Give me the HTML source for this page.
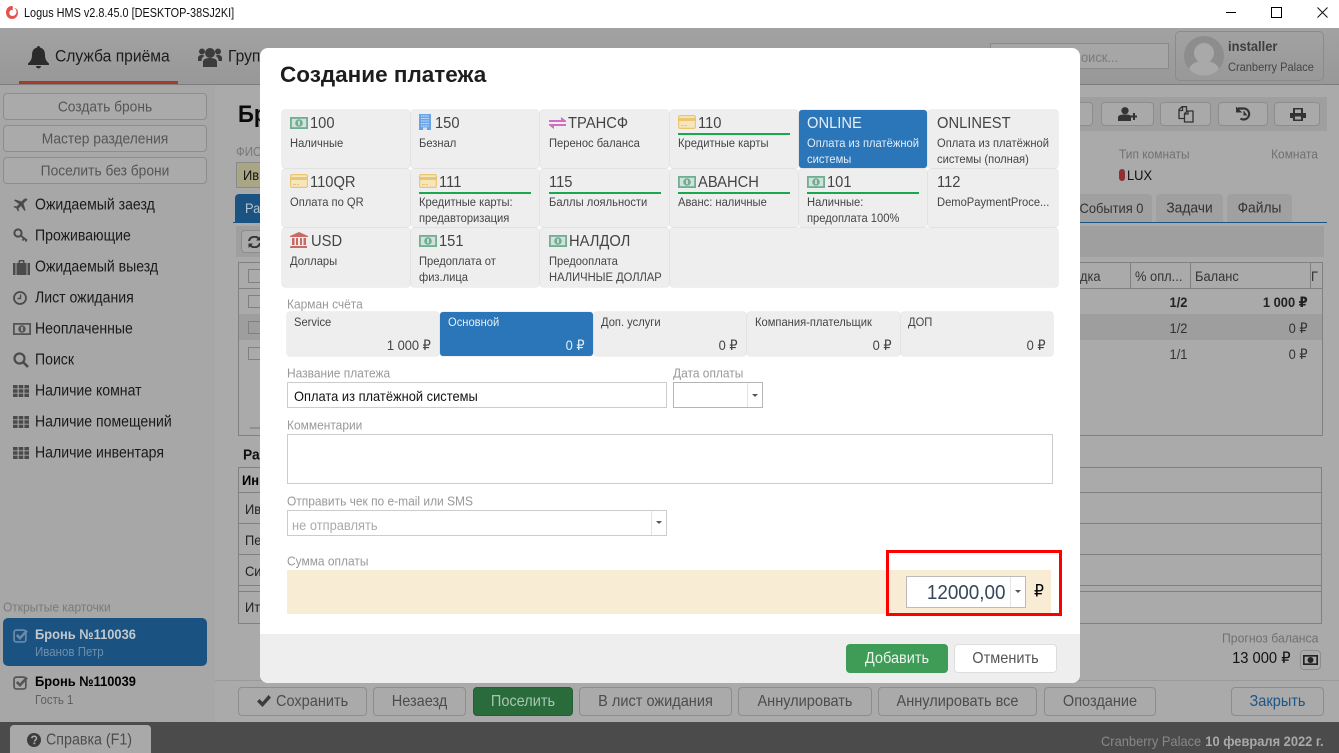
<!DOCTYPE html>
<html lang="ru"><head><meta charset="utf-8"><title>Logus HMS</title>
<style>
*{box-sizing:border-box}
html,body{margin:0;padding:0;width:1339px;height:753px;overflow:hidden;background:#aaa}
body{position:relative;font-family:"Liberation Sans","DejaVu Sans",sans-serif;color:#1c1c1c}
.b{position:absolute}
.t,.r,.c{position:absolute;white-space:nowrap;line-height:1}
.t{transform-origin:left center;transform:translateY(-50%) scaleX(.92)}
.r{transform-origin:right center;transform:translateY(-50%) scaleX(.92)}
.c{text-align:center;transform:translateY(-50%) scaleX(.92)}
.bt{position:absolute;border:1px solid #8d8d8d;border-radius:4px;background:#aaa}
.s{position:absolute}
.cell{position:absolute;background:#eee;border-radius:3px;box-shadow:0 0 0 .5px #e2e2e2}
.big{font-size:16px;color:#444;margin-top:.6px}
.ds{font-size:12.15px;color:#444}
.gl{position:absolute;height:2px;background:#1aa84f;width:112px}
.lbl{font-size:13px;color:#999}
.pk{position:absolute;background:#eee;top:312px;height:44px;border-radius:3px;box-shadow:0 0 0 .5px #e2e2e2}
.men{font-size:15.3px;color:#1a1a1a}
.sb{font-size:15px;color:#555}
.act{font-size:15.8px;color:#4c4c4c}
.tx{font-size:14px;color:#222}
.ln{position:absolute;background:#808080}
</style></head><body>
<svg width="0" height="0" style="position:absolute"><defs>
<symbol id="m" viewBox="0 0 18 12"><rect width="18" height="12" fill="#6fae93"/><rect x="1.800" y="1.800" width="14.400" height="8.400" fill="#d3e2d9"/><circle cx="9" cy="6" r="3.800" fill="#6fae93"/><rect x="8.300" y="3.800" width="1.400" height="4.400" fill="#e8f2ec"/></symbol>
<symbol id="card" viewBox="0 0 18 14"><rect x=".6" y=".6" width="16.800" height="12.800" rx="1.500" fill="#f6e6bd" stroke="#eac673" stroke-width="1.200"/><rect x="1" y="3" width="16" height="3" fill="#eac673"/><rect x="3" y="10" width="3" height="1" fill="#eac673"/><rect x="7" y="10" width="2" height="1" fill="#eac673"/></symbol>
<symbol id="bank" viewBox="0 0 18 16"><path d="M9 0L18 4V5H0V4Z M1 14H17V16H0V15Z M2 6H4.500V13H2Z M6 6H8V13H6Z M10 6H12V13H10Z M13.500 6H16V13H13.500Z" fill="#c96a63"/></symbol>
<symbol id="bld" viewBox="0 0 12 16"><rect width="12" height="16" fill="#6ba4e6"/><path d="M2 2h8M2 4.500h8M2 7h8M2 9.500h8M2 12h8" stroke="#cfe2f8" stroke-width="1.100" stroke-dasharray="1.500 .6"/><rect x="4" y="13.500" width="4" height="2.500" fill="#cfe2f8"/></symbol>
<symbol id="tr" viewBox="0 0 17 12"><path d="M0 3h12V0l5 3.700V5H0ZM17 7H0v1.300L5 12V9h12Z" fill="#cf6fc0"/></symbol>
<symbol id="grid" viewBox="0 0 16 12"><path d="M0 0h4.600v3.400H0zM5.700 0h4.600v3.400H5.700zM11.400 0H16v3.400h-4.600zM0 4.300h4.600v3.400H0zM5.700 4.300h4.600v3.400H5.700zM11.400 4.300H16v3.400h-4.600zM0 8.600h4.600V12H0zM5.700 8.600h4.600V12H5.700zM11.400 8.600H16V12h-4.600z" fill="#4b4b4b"/></symbol>
<symbol id="arr" viewBox="0 0 6 3"><path d="M0 0h6L3 3Z" fill="#555"/></symbol>
<symbol id="chk" viewBox="0 0 14 14"><rect x="1" y="2" width="11" height="11" rx="2" fill="none" stroke="currentColor" stroke-width="1.600"/><path d="M3.500 6.500L6.500 9.500L13 2.500" fill="none" stroke="currentColor" stroke-width="2.400"/></symbol>
</defs></svg>

<!-- Title bar -->
<div class="b" style="left:0;top:0;width:1339px;height:28px;background:#fff"></div>
<svg class="s" style="left:5px;top:5px" width="14" height="15" viewBox="0 0 14 15"><path d="M7 1C3 1 1 4 1 7.500S3.500 14 7 14s6-3 6-6.500C13 4.500 11 3 9 3c2 1 2.500 2.500 2.500 4S10 11 7.500 11 4 9 4.500 7 7 4.500 8 5.500C7 2.500 9 2 7 1Z" fill="#e8504a"/></svg>
<div class="t" style="left:24px;top:13px;font-size:12.500px;color:#111;transform:translateY(-50%) scaleX(.87)">Logus HMS v2.8.45.0 [DESKTOP-38SJ2KI]</div>
<div class="b" style="left:1226px;top:12px;width:10px;height:1px;background:#000"></div>
<div class="b" style="left:1271px;top:7px;width:11px;height:11px;border:1px solid #000"></div>
<svg class="s" style="left:1317px;top:7px" width="11" height="11"><path d="M.5.500L10.500 10.500M10.500.500L.5 10.500" stroke="#111"/></svg>

<!-- Nav -->
<div class="b" style="left:0;top:28px;width:1339px;height:57px;background:linear-gradient(#a2a2a2,#989898);border-bottom:1px solid #7d7d7d"></div>
<div class="b" style="left:19px;top:81px;width:159px;height:3px;background:#a63a2b"></div>
<svg class="s" style="left:28px;top:46px" width="21" height="23" viewBox="0 0 21 23"><path d="M10.500 0c1 0 1.500.7 1.500 1.500C15.500 2.500 17 5 17 9c0 5 2 6.500 4 8.500V19H0v-1.500C2 15.500 4 14 4 9c0-4 1.500-6.500 5-7.500C9 .7 9.500 0 10.500 0ZM8 20h5a2.500 2.500 0 0 1-5 0Z" fill="#2b2b2b"/></svg>
<div class="t" style="left:55px;top:56px;font-size:17px;color:#1c1c1c">Служба приёма</div>
<svg class="s" style="left:198px;top:45px" width="24" height="24" viewBox="0 0 24 24"><g fill="#3c3c3c"><circle cx="12" cy="8" r="5"/><circle cx="4" cy="6.500" r="3"/><circle cx="20" cy="6.500" r="3"/><path d="M5 22v-5c0-3 3-4 7-4s7 1 7 4v5Z"/><path d="M0 16v-3c0-2 1.500-3 4-3 1 0 2 .2 2.500 1C4.500 12 3.500 13.500 3.500 16ZM24 16v-3c0-2-1.500-3-4-3-1 0-2 .2-2.500 1 2 1 3 2.500 3 5Z"/></g></svg>
<div class="t" style="left:228px;top:56px;font-size:17px;color:#1c1c1c">Груп</div>

<div class="b" style="left:990px;top:43px;width:179px;height:26px;background:#a6a6a6;border:1px solid #8a8a8a"></div>
<div class="t" style="left:1081px;top:57px;font-size:14px;color:#7a7a7a">оиск...</div>
<div class="b" style="left:1175px;top:31px;width:149px;height:50px;border:1px solid #8b8b8b;border-radius:5px"></div>
<svg class="s" style="left:1184px;top:36px" width="40" height="40" viewBox="0 0 40 40"><circle cx="20" cy="20" r="20" fill="#8d8d8d"/><circle cx="20" cy="17" r="10" fill="#a9a9a9"/><path d="M5 33C7 27 13 25 20 25s13 2 15 8A20 20 0 0 1 5 33Z" fill="#a9a9a9"/></svg>
<div class="t" style="left:1228px;top:46px;font-size:14px;font-weight:bold;color:#3e3e3e">installer</div>
<div class="t" style="left:1228px;top:67px;font-size:12px;color:#444">Cranberry Palace</div>

<!-- Sidebar -->
<div class="b" style="left:0;top:85px;width:215px;height:637px;background:#a7a7a7"></div>
<div class="bt" style="left:3px;top:93px;width:204px;height:27px"></div>
<div class="bt" style="left:3px;top:125px;width:204px;height:27px"></div>
<div class="bt" style="left:3px;top:157px;width:204px;height:27px"></div>
<div class="c sb" style="left:3px;width:204px;top:107px">Создать бронь</div>
<div class="c sb" style="left:3px;width:204px;top:139px">Мастер разделения</div>
<div class="c sb" style="left:3px;width:204px;top:171px">Поселить без брони</div>

<svg class="s" style="left:13px;top:198px" width="15" height="15" viewBox="0 0 15 15"><path d="M14 1c-1-1-2.500-.5-3.500.5L8.500 3.500 2 1.500 1 2.500l5 3.500-2.500 2.500-2-.5L.5 9l3 1.500L5 13.500l1-1-.5-2L8 8l3.500 5 1-1-2-6.500 2-2C13.500 2.500 15 2 14 1Z" fill="#4b4b4b"/></svg>
<svg class="s" style="left:13px;top:228px" width="16" height="16" viewBox="0 0 16 16"><circle cx="5" cy="5" r="3.600" fill="none" stroke="#4b4b4b" stroke-width="2"/><path d="M7.500 7.500L14 12.500M11 10.500l-1.500 2M13.500 12l-1 1.500" stroke="#4b4b4b" stroke-width="1.800" fill="none"/></svg>
<svg class="s" style="left:13px;top:260px" width="17" height="15" viewBox="0 0 17 15"><path d="M5.500 3V1c0-.5.500-1 1-1h4c.5 0 1 .5 1 1v2H17v12H0V3ZM7 3h3V1.500H7Z" fill="#4b4b4b"/><path d="M3 3v12M14 3v12" stroke="#a7a7a7"/></svg>
<svg class="s" style="left:13px;top:291px" width="14" height="14" viewBox="0 0 14 14"><circle cx="7" cy="7" r="6" fill="none" stroke="#4b4b4b" stroke-width="1.800"/><path d="M7.500 3.500V7.500H4.500" fill="none" stroke="#4b4b4b" stroke-width="1.400"/></svg>
<svg class="s" style="left:13px;top:323px" width="18" height="12" viewBox="0 0 18 12"><rect width="18" height="12" fill="#555"/><rect x="1.800" y="1.800" width="14.400" height="8.400" fill="#a7a7a7"/><circle cx="9" cy="6" r="3.800" fill="#555"/><rect x="8.300" y="3.800" width="1.400" height="4.400" fill="#bbb"/></svg>
<svg class="s" style="left:13px;top:352px" width="16" height="16" viewBox="0 0 16 16"><circle cx="6.500" cy="6.500" r="5" fill="none" stroke="#4b4b4b" stroke-width="2.200"/><path d="M10 10l5 5" stroke="#4b4b4b" stroke-width="2.600"/></svg>
<svg class="s" style="left:13px;top:385px" width="16" height="12"><use href="#grid"/></svg>
<svg class="s" style="left:13px;top:416px" width="16" height="12"><use href="#grid"/></svg>
<svg class="s" style="left:13px;top:447px" width="16" height="12"><use href="#grid"/></svg>
<div class="t men" style="left:35px;top:205px">Ожидаемый заезд</div>
<div class="t men" style="left:35px;top:236px">Проживающие</div>
<div class="t men" style="left:35px;top:267px">Ожидаемый выезд</div>
<div class="t men" style="left:35px;top:298px">Лист ожидания</div>
<div class="t men" style="left:35px;top:329px">Неоплаченные</div>
<div class="t men" style="left:35px;top:360px">Поиск</div>
<div class="t men" style="left:35px;top:391px">Наличие комнат</div>
<div class="t men" style="left:35px;top:422px">Наличие помещений</div>
<div class="t men" style="left:35px;top:453px">Наличие инвентаря</div>

<div class="t" style="left:3px;top:607px;font-size:13px;color:#7a7a7a">Открытые карточки</div>
<div class="b" style="left:3px;top:618px;width:204px;height:48px;background:#1a5282;border-radius:5px"></div>
<svg class="s" style="left:13px;top:628px;color:#6a8aa6" width="15" height="15"><use href="#chk"/></svg>
<div class="t" style="left:35px;top:634px;font-size:14px;font-weight:bold;color:#c3c8cd">Бронь №110036</div>
<div class="t" style="left:35px;top:652px;font-size:12.500px;color:#6f8ea9">Иванов Петр</div>
<svg class="s" style="left:13px;top:675px;color:#555" width="15" height="15"><use href="#chk"/></svg>
<div class="t" style="left:35px;top:681px;font-size:14px;font-weight:bold;color:#000">Бронь №110039</div>
<div class="t" style="left:35px;top:700px;font-size:12.500px;color:#606060">Гость 1</div>

<!-- Main behind modal -->
<div class="t" style="left:238px;top:115px;font-size:24px;font-weight:bold;color:#0a0a0a">Бр</div>
<div class="t" style="left:236px;top:152px;font-size:12.500px;color:#787878">ФИО</div>
<div class="b" style="left:236px;top:162px;width:30px;height:26px;background:#a9a686;border:1px solid #8a8a8a"></div>
<div class="t" style="left:243px;top:175px;font-size:14px;color:#111">Ив</div>
<div class="b" style="left:235px;top:194px;width:30px;height:28px;background:#1a5282;border-radius:4px 0 0 0"></div>
<div class="t" style="left:245px;top:208px;font-size:14px;color:#b7c6d4">Ра</div>
<div class="b" style="left:233px;top:222px;width:1094px;height:1px;background:#1a5282"></div>
<div class="b" style="left:236px;top:226px;width:1088px;height:31px;background:#9f9f9f"></div>
<div class="bt" style="left:241px;top:230px;width:30px;height:23px"></div>
<svg class="s" style="left:248px;top:236px" width="13" height="12" viewBox="0 0 13 12"><path d="M1 5a5.500 5 0 0 1 10-2M12 7a5.500 5 0 0 1-10 2" fill="none" stroke="#333" stroke-width="2"/><path d="M12.500 0v4.500H8ZM.5 12V7.500H5Z" fill="#333"/></svg>

<div class="b" style="left:238px;top:262px;width:1085px;height:174px;border:1px solid #808080"></div>
<div class="ln" style="left:238px;top:288px;width:1085px;height:1px"></div>
<div class="b" style="left:239px;top:314px;width:1083px;height:26px;background:#9e9e9e"></div>
<div class="b" style="left:248px;top:269px;width:14px;height:14px;border:1px solid #808080"></div>
<div class="b" style="left:248px;top:295px;width:13px;height:13px;border:1px solid #808080"></div>
<div class="b" style="left:248px;top:321px;width:13px;height:13px;border:1px solid #808080"></div>
<div class="b" style="left:248px;top:347px;width:13px;height:13px;border:1px solid #808080"></div>
<div class="b" style="left:250px;top:427px;width:10px;height:2px;background:#909090"></div>
<div class="ln" style="left:1130px;top:263px;width:1px;height:25px"></div>
<div class="ln" style="left:1190px;top:263px;width:1px;height:25px"></div>
<div class="ln" style="left:1310px;top:263px;width:1px;height:25px"></div>
<div class="t tx" style="left:1080px;top:276px;color:#333">дка</div>
<div class="t tx" style="left:1135px;top:276px;color:#333">% опл...</div>
<div class="t tx" style="left:1195px;top:276px;color:#333">Баланс</div>
<div class="t tx" style="left:1311px;top:276px;color:#333">Г</div>
<div class="r tx" style="right:152px;top:302px;font-weight:bold;color:#222">1/2</div>
<div class="r tx" style="right:31px;top:302px;font-weight:bold;color:#222">1 000 ₽</div>
<div class="r tx" style="right:152px;top:328px;color:#333">1/2</div>
<div class="r tx" style="right:31px;top:328px;color:#333">0 ₽</div>
<div class="r tx" style="right:152px;top:354px;color:#333">1/1</div>
<div class="r tx" style="right:31px;top:354px;color:#333">0 ₽</div>

<div class="t" style="left:243px;top:455px;font-size:15px;font-weight:bold;color:#111">Ра</div>
<div class="b" style="left:238px;top:467px;width:1084px;height:157px;border:1px solid #808080"></div>
<div class="ln" style="left:238px;top:492px;width:1084px;height:1px"></div>
<div class="ln" style="left:238px;top:523px;width:1084px;height:1px"></div>
<div class="ln" style="left:238px;top:554px;width:1084px;height:1px"></div>
<div class="ln" style="left:238px;top:585px;width:1084px;height:1px"></div>
<div class="ln" style="left:238px;top:591px;width:1084px;height:1px"></div>
<div class="t tx" style="left:242px;top:480px;font-weight:bold;color:#000">Ин</div>
<div class="t tx" style="left:245px;top:509px">Ив</div>
<div class="t tx" style="left:245px;top:540px">Пе</div>
<div class="t tx" style="left:245px;top:571px">Си</div>
<div class="t tx" style="left:245px;top:607px">Ит</div>

<!-- top right -->
<div class="b" style="left:1070px;top:97px;width:257px;height:34px;background:#9f9f9f"></div>
<div class="bt" style="left:1060px;top:102px;width:33px;height:24px;background:#a9a9a9"></div>
<div class="bt" style="left:1101px;top:102px;width:53px;height:24px;background:#a9a9a9"></div>
<div class="bt" style="left:1160px;top:102px;width:51px;height:24px;background:#a9a9a9"></div>
<div class="bt" style="left:1218px;top:102px;width:50px;height:24px;background:#a9a9a9"></div>
<div class="bt" style="left:1274px;top:102px;width:46px;height:24px;background:#a9a9a9"></div>
<svg class="s" style="left:1118px;top:107px" width="19" height="14" viewBox="0 0 19 14"><circle cx="7" cy="3.700" r="3.600" fill="#333"/><path d="M0 14V10.500C0 8.500 2 7.500 7 7.500s6 1 6 2V14ZM12 8.500h3V6h2v2.500h2v2h-2V13h-2v-2.500h-3Z" fill="#333"/></svg>
<svg class="s" style="left:1178px;top:106px" width="16" height="17" viewBox="0 0 16 17"><path d="M1 3.500L4 .7H8.500V5H15V16H6.500V12.500H1ZM1 4.500H4.500V1M6.500 12.500V7.500L9.500 5M10 5V8H6.500" fill="none" stroke="#333" stroke-width="1.300"/></svg>
<svg class="s" style="left:1236px;top:107px" width="15" height="14" viewBox="0 0 15 14"><path d="M2 1.500H8a5.500 5.500 0 1 1-3.500 10" fill="none" stroke="#333" stroke-width="2.200"/><path d="M0 0v5h5ZM8 4v4h3" fill="#333" stroke="#333"/></svg>
<svg class="s" style="left:1290px;top:107px" width="16" height="14" viewBox="0 0 16 14"><path d="M3 6V1h10v5h3v5h-3v3H3v-3H0V6Zm2 0h6V2.500H5Zm0 6.500h6V9.500H5Z" fill="#333" fill-rule="evenodd"/></svg>
<div class="t" style="left:1119px;top:154px;font-size:13px;color:#707070">Тип комнаты</div>
<div class="r" style="right:21px;top:154px;font-size:13px;color:#707070">Комната</div>
<div class="b" style="left:1119px;top:169px;width:6px;height:12px;background:#8f2f2f;border-radius:3px"></div>
<div class="t" style="left:1127px;top:175px;font-size:14px;color:#111">LUX</div>
<div class="b" style="left:1070px;top:194px;width:82px;height:28px;background:#a0a0a0;border-radius:4px 4px 0 0"></div>
<div class="b" style="left:1156px;top:194px;width:67px;height:28px;background:#a0a0a0;border-radius:4px 4px 0 0"></div>
<div class="b" style="left:1227px;top:194px;width:65px;height:28px;background:#a0a0a0;border-radius:4px 4px 0 0"></div>
<div class="r tx" style="right:196px;top:208px;color:#333">События 0</div>
<div class="c" style="left:1156px;width:67px;top:208px;color:#333;font-size:15px">Задачи</div>
<div class="c" style="left:1227px;width:65px;top:208px;color:#333;font-size:15px">Файлы</div>

<div class="t" style="left:1222px;top:638px;font-size:13.300px;color:#707070">Прогноз баланса</div>
<div class="r" style="right:48px;top:659px;font-size:16px;color:#111">13 000 ₽</div>
<div class="bt" style="left:1300px;top:650px;width:21px;height:20px"></div>
<svg class="s" style="left:1303px;top:655px" width="15" height="10" viewBox="0 0 18 12"><rect width="18" height="12" fill="#222"/><rect x="2" y="2" width="14" height="8" fill="#aaa"/><circle cx="9" cy="6" r="3.600" fill="#222"/></svg>

<!-- Action bar -->
<div class="b" style="left:215px;top:680px;width:1124px;height:1px;background:#9a9a9a"></div>
<div class="bt" style="left:238px;top:687px;width:129px;height:29px"></div>
<svg class="s" style="left:257px;top:695px" width="14" height="12" viewBox="0 0 14 12"><path d="M0 6.500L2.500 4 5.500 7 11.500 0 14 2.500 5.500 12Z" fill="#3c3c3c"/></svg>
<div class="t act" style="left:276px;top:702px">Сохранить</div>
<div class="bt" style="left:373px;top:687px;width:93px;height:29px"></div><div class="c act" style="left:373px;width:93px;top:702px">Незаезд</div>
<div class="bt" style="left:473px;top:687px;width:100px;height:29px;background:#2a6b3b;border-color:#255f34"></div><div class="c act" style="left:473px;width:100px;top:702px;color:#a9c7b0">Поселить</div>
<div class="bt" style="left:579px;top:687px;width:153px;height:29px"></div><div class="c act" style="left:579px;width:153px;top:702px">В лист ожидания</div>
<div class="bt" style="left:738px;top:687px;width:134px;height:29px"></div><div class="c act" style="left:738px;width:134px;top:702px">Аннулировать</div>
<div class="bt" style="left:878px;top:687px;width:159px;height:29px"></div><div class="c act" style="left:878px;width:159px;top:702px">Аннулировать все</div>
<div class="bt" style="left:1044px;top:687px;width:112px;height:29px"></div><div class="c act" style="left:1044px;width:112px;top:702px">Опоздание</div>
<div class="bt" style="left:1231px;top:687px;width:93px;height:29px"></div><div class="c act" style="left:1231px;width:93px;top:702px;color:#1e5585">Закрыть</div>

<!-- Footer bar -->
<div class="b" style="left:0;top:722px;width:1339px;height:31px;background:#4b4b4b"></div>
<div class="b" style="left:10px;top:725px;width:141px;height:28px;background:#a9a9a9;border-radius:4px 4px 0 0"></div>
<svg class="s" style="left:27px;top:733px" width="14" height="14" viewBox="0 0 14 14"><circle cx="7" cy="7" r="7" fill="#3c3c3c"/><path d="M4.700 5.200C5 3.800 6 3.300 7.200 3.300c1.300 0 2.300.8 2.300 2 0 1.700-2 1.700-2 3.200" fill="none" stroke="#a9a9a9" stroke-width="1.500"/><rect x="6.400" y="9.500" width="1.900" height="1.700" fill="#a9a9a9"/></svg>
<div class="t" style="left:46px;top:740px;font-size:15.500px;color:#4c4c4c">Справка (F1)</div>
<div class="t" style="left:1101px;top:741px;font-size:14px;color:#888">Cranberry Palace</div>
<div class="r" style="right:15px;top:741px;font-size:14px;font-weight:bold;color:#a9a9a9">10 февраля 2022 г.</div>

<!-- Modal -->
<div class="b" style="left:260px;top:48px;width:820px;height:635px;background:#fff;border-radius:8px;overflow:hidden">
  <div class="b" style="left:0;top:586px;width:820px;height:49px;background:#eee"></div>
</div>
<div class="t" style="left:280px;top:75px;font-size:22.500px;font-weight:bold;color:#1d1d1d;transform:translateY(-50%) scaleX(1)">Создание платежа</div>

<!-- grid -->
<div class="cell" style="left:282px;top:110px;width:128px;height:58px"></div>
<div class="cell" style="left:411px;top:110px;width:128px;height:58px"></div>
<div class="cell" style="left:540px;top:110px;width:129px;height:58px"></div>
<div class="cell" style="left:670px;top:110px;width:128px;height:58px"></div>
<div class="cell" style="left:799px;top:110px;width:128px;height:58px;background:#2b75b9"></div>
<div class="cell" style="left:928px;top:110px;width:130px;height:58px"></div>
<div class="cell" style="left:282px;top:169px;width:128px;height:58px"></div>
<div class="cell" style="left:411px;top:169px;width:128px;height:58px"></div>
<div class="cell" style="left:540px;top:169px;width:129px;height:58px"></div>
<div class="cell" style="left:670px;top:169px;width:128px;height:58px"></div>
<div class="cell" style="left:799px;top:169px;width:128px;height:58px"></div>
<div class="cell" style="left:928px;top:169px;width:130px;height:58px"></div>
<div class="cell" style="left:282px;top:228px;width:128px;height:59px"></div>
<div class="cell" style="left:411px;top:228px;width:128px;height:59px"></div>
<div class="cell" style="left:540px;top:228px;width:129px;height:59px"></div>
<div class="cell" style="left:670px;top:228px;width:388px;height:59px"></div>

<svg class="s" style="left:290px;top:117px" width="18" height="12"><use href="#m"/></svg>
<div class="t big" style="left:310px;top:123px">100</div><div class="t ds" style="left:290px;top:143px">Наличные</div>
<svg class="s" style="left:419px;top:114px" width="12" height="16"><use href="#bld"/></svg>
<div class="t big" style="left:435px;top:123px">150</div><div class="t ds" style="left:419px;top:143px">Безнал</div>
<svg class="s" style="left:549px;top:117px" width="17" height="12"><use href="#tr"/></svg>
<div class="t big" style="left:568px;top:123px">ТРАНСФ</div><div class="t ds" style="left:549px;top:143px">Перенос баланса</div>
<svg class="s" style="left:678px;top:115px" width="18" height="14"><use href="#card"/></svg>
<div class="t big" style="left:698px;top:123px">110</div><div class="gl" style="left:678px;top:133px"></div><div class="t ds" style="left:678px;top:143px">Кредитные карты</div>
<div class="t big" style="left:807px;top:123px;color:#e4eef7">ONLINE</div><div class="t ds" style="left:807px;top:143px;color:#e4eef7">Оплата из платёжной</div><div class="t ds" style="left:807px;top:159px;color:#e4eef7">системы</div>
<div class="t big" style="left:937px;top:123px">ONLINEST</div><div class="t ds" style="left:937px;top:143px">Оплата из платёжной</div><div class="t ds" style="left:937px;top:159px">системы (полная)</div>

<svg class="s" style="left:290px;top:174px" width="18" height="14"><use href="#card"/></svg>
<div class="t big" style="left:310px;top:182px">110QR</div><div class="t ds" style="left:290px;top:202px">Оплата по QR</div>
<svg class="s" style="left:419px;top:174px" width="18" height="14"><use href="#card"/></svg>
<div class="t big" style="left:439px;top:182px">111</div><div class="gl" style="left:419px;top:192px"></div><div class="t ds" style="left:419px;top:202px">Кредитные карты:</div><div class="t ds" style="left:419px;top:218px">предавторизация</div>
<div class="t big" style="left:549px;top:182px">115</div><div class="gl" style="left:549px;top:192px"></div><div class="t ds" style="left:549px;top:202px">Баллы лояльности</div>
<svg class="s" style="left:678px;top:176px" width="18" height="12"><use href="#m"/></svg>
<div class="t big" style="left:698px;top:182px">АВАНСН</div><div class="gl" style="left:678px;top:192px"></div><div class="t ds" style="left:678px;top:202px">Аванс: наличные</div>
<svg class="s" style="left:807px;top:176px" width="18" height="12"><use href="#m"/></svg>
<div class="t big" style="left:827px;top:182px">101</div><div class="gl" style="left:807px;top:192px"></div><div class="t ds" style="left:807px;top:202px">Наличные:</div><div class="t ds" style="left:807px;top:218px">предоплата 100%</div>
<div class="t big" style="left:937px;top:182px">112</div><div class="t ds" style="left:937px;top:202px">DemoPaymentProce...</div>

<svg class="s" style="left:290px;top:232px" width="18" height="16"><use href="#bank"/></svg>
<div class="t big" style="left:311px;top:241px">USD</div><div class="t ds" style="left:290px;top:261px">Доллары</div>
<svg class="s" style="left:419px;top:235px" width="18" height="12"><use href="#m"/></svg>
<div class="t big" style="left:439px;top:241px">151</div><div class="t ds" style="left:419px;top:261px">Предоплата от</div><div class="t ds" style="left:419px;top:277px">физ.лица</div>
<svg class="s" style="left:549px;top:235px" width="18" height="12"><use href="#m"/></svg>
<div class="t big" style="left:569px;top:241px">НАЛДОЛ</div><div class="t ds" style="left:549px;top:261px">Предооплата</div><div class="t ds" style="left:549px;top:277px">НАЛИЧНЫЕ ДОЛЛАР</div>

<!-- pockets -->
<div class="t lbl" style="left:287px;top:303.500px">Карман счёта</div>
<div class="pk" style="left:287px;width:152px"></div>
<div class="pk" style="left:440px;width:153px;background:#2b75b9"></div>
<div class="pk" style="left:594px;width:152px"></div>
<div class="pk" style="left:747px;width:153px"></div>
<div class="pk" style="left:901px;width:152px"></div>
<div class="t ds" style="left:294px;top:322px">Service</div><div class="r" style="right:908px;top:345px;font-size:14px;color:#444">1 000 ₽</div>
<div class="t ds" style="left:448px;top:322px;color:#e4eef7">Основной</div><div class="r" style="right:754px;top:345px;font-size:14px;color:#e4eef7">0 ₽</div>
<div class="t ds" style="left:601px;top:322px">Доп. услуги</div><div class="r" style="right:601px;top:345px;font-size:14px;color:#444">0 ₽</div>
<div class="t ds" style="left:755px;top:322px">Компания-плательщик</div><div class="r" style="right:447px;top:345px;font-size:14px;color:#444">0 ₽</div>
<div class="t ds" style="left:908px;top:322px">ДОП</div><div class="r" style="right:293px;top:345px;font-size:14px;color:#444">0 ₽</div>

<!-- form -->
<div class="t lbl" style="left:287px;top:372.500px">Название платежа</div>
<div class="b" style="left:287px;top:382px;width:380px;height:26px;border:1px solid #ccc"></div>
<div class="t" style="left:294px;top:395.500px;font-size:14px;color:#111">Оплата из платёжной системы</div>
<div class="t lbl" style="left:673px;top:372.500px">Дата оплаты</div>
<div class="b" style="left:673px;top:382px;width:90px;height:26px;border:1px solid #b5b5b5"></div>
<div class="b" style="left:747px;top:383px;width:1px;height:24px;background:#e4e4e4"></div>
<svg class="s" style="left:752px;top:394px" width="6" height="3"><use href="#arr"/></svg>
<div class="t lbl" style="left:287px;top:424.500px">Комментарии</div>
<div class="b" style="left:287px;top:434px;width:766px;height:50px;border:1px solid #ccc"></div>
<div class="t lbl" style="left:287px;top:500.500px">Отправить чек по e-mail или SMS</div>
<div class="b" style="left:287px;top:510px;width:380px;height:26px;border:1px solid #ccc"></div>
<div class="t" style="left:292px;top:524.500px;font-size:14px;color:#aaa">не отправлять</div>
<div class="b" style="left:651px;top:511px;width:1px;height:24px;background:#e4e4e4"></div>
<svg class="s" style="left:656px;top:521px" width="6" height="3"><use href="#arr"/></svg>
<div class="t lbl" style="left:287px;top:560.500px">Сумма оплаты</div>
<div class="b" style="left:287px;top:570px;width:764px;height:44px;background:#f9ecd4"></div>
<div class="b" style="left:906px;top:576px;width:120px;height:32px;background:#fff;border:1px solid #bbb"></div>
<div class="b" style="left:1010px;top:577px;width:1px;height:30px;background:#e4e4e4"></div>
<svg class="s" style="left:1015px;top:590px" width="6" height="3"><use href="#arr"/></svg>
<div class="r" style="right:333px;top:593px;font-size:20.500px;color:#35475a">12000,00</div>
<div class="t" style="left:1034px;top:591px;font-size:17px;color:#000">₽</div>
<div class="b" style="left:886px;top:550px;width:176px;height:66px;border:3px solid #f00"></div>

<div class="b" style="left:846px;top:644px;width:102px;height:29px;background:#3f9c57;border-radius:4px"></div>
<div class="c" style="left:846px;width:102px;top:659px;font-size:15.800px;color:#eaf5ec">Добавить</div>
<div class="b" style="left:954px;top:644px;width:103px;height:29px;background:#fff;border:1px solid #ddd;border-radius:4px"></div>
<div class="c" style="left:954px;width:103px;top:659px;font-size:15.800px;color:#555">Отменить</div>
</body></html>
